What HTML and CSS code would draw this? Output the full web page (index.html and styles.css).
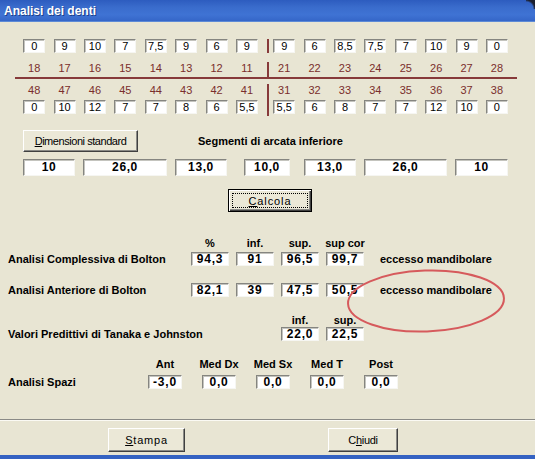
FILE: index.html
```html
<!DOCTYPE html>
<html>
<head>
<meta charset="utf-8">
<title>Analisi dei denti</title>
<link rel="stylesheet" href="styles.css">
</head>
<body>
<div class="window">
  <div class="titlebar">Analisi dei denti</div>
  <span class="corner"></span>

  <div class="teeth">
    <div class="trow row-top">
      <div class="half left">
        <span class="field tbox">0</span><span class="field tbox">9</span><span class="field tbox">10</span><span class="field tbox">7</span><span class="field tbox">7,5</span><span class="field tbox">9</span><span class="field tbox">6</span><span class="field tbox">9</span>
      </div>
      <div class="half right">
        <span class="field tbox">9</span><span class="field tbox">6</span><span class="field tbox">8,5</span><span class="field tbox">7,5</span><span class="field tbox">7</span><span class="field tbox">10</span><span class="field tbox">9</span><span class="field tbox">0</span>
      </div>
    </div>
    <div class="trow row-lab1">
      <div class="half left">
        <span class="tnum">18</span><span class="tnum">17</span><span class="tnum">16</span><span class="tnum">15</span><span class="tnum">14</span><span class="tnum">13</span><span class="tnum">12</span><span class="tnum">11</span>
      </div>
      <div class="half right">
        <span class="tnum">21</span><span class="tnum">22</span><span class="tnum">23</span><span class="tnum">24</span><span class="tnum">25</span><span class="tnum">26</span><span class="tnum">27</span><span class="tnum">28</span>
      </div>
    </div>
    <div class="hline"></div>
    <div class="trow row-lab2">
      <div class="half left">
        <span class="tnum">48</span><span class="tnum">47</span><span class="tnum">46</span><span class="tnum">45</span><span class="tnum">44</span><span class="tnum">43</span><span class="tnum">42</span><span class="tnum">41</span>
      </div>
      <div class="half right">
        <span class="tnum">31</span><span class="tnum">32</span><span class="tnum">33</span><span class="tnum">34</span><span class="tnum">35</span><span class="tnum">36</span><span class="tnum">37</span><span class="tnum">38</span>
      </div>
    </div>
    <div class="trow row-bot">
      <div class="half left">
        <span class="field tbox">0</span><span class="field tbox">10</span><span class="field tbox">12</span><span class="field tbox">7</span><span class="field tbox">7</span><span class="field tbox">8</span><span class="field tbox">6</span><span class="field tbox">5,5</span>
      </div>
      <div class="half right">
        <span class="field tbox">5,5</span><span class="field tbox">6</span><span class="field tbox">8</span><span class="field tbox">7</span><span class="field tbox">7</span><span class="field tbox">12</span><span class="field tbox">10</span><span class="field tbox">0</span>
      </div>
    </div>
  </div>

  <div class="std-row">
    <div class="btn btn-std"><span><u>D</u>imensioni standard</span></div>
    <div class="seg-title">Segmenti di arcata inferiore</div>
  </div>

  <div class="seg-row">
    <span class="field seg w52">10</span>
    <span class="field seg w84">26,0</span>
    <span class="field seg w52">13,0</span>
    <span class="field seg w46 mid">10,0</span>
    <span class="field seg w52 after-mid">13,0</span>
    <span class="field seg w83">26,0</span>
    <span class="field seg w53">10</span>
  </div>

  <div class="calc-row">
    <div class="btn btn-default"><span class="focus"><u>C</u>alcola</span></div>
  </div>

  <div class="analysis">
    <div class="arow hdr-row1">
      <span class="hdr c2">%</span><span class="hdr">inf.</span><span class="hdr">sup.</span><span class="hdr">sup cor</span>
    </div>
    <div class="arow row1">
      <span class="lbl">Analisi Complessiva di Bolton</span>
      <span class="field abox">94,3</span><span class="field abox">91</span><span class="field abox">96,5</span><span class="field abox">99,7</span>
      <span class="note">eccesso mandibolare</span>
    </div>
    <div class="arow row2">
      <span class="lbl">Analisi Anteriore di Bolton</span>
      <span class="field abox">82,1</span><span class="field abox">39</span><span class="field abox">47,5</span><span class="field abox">50,5</span>
      <span class="note">eccesso mandibolare</span>
    </div>
    <div class="arow hdr-row2">
      <span class="hdr c4">inf.</span><span class="hdr">sup.</span>
    </div>
    <div class="arow row3">
      <span class="lbl span3">Valori Predittivi di Tanaka e Johnston</span>
      <span class="field abox">22,0</span><span class="field abox">22,5</span>
    </div>
  </div>

  <div class="spazi">
    <div class="srow shdr">
      <span class="hdr c2">Ant</span><span class="hdr">Med Dx</span><span class="hdr">Med Sx</span><span class="hdr">Med T</span><span class="hdr">Post</span>
    </div>
    <div class="srow sboxes">
      <span class="lbl">Analisi Spazi</span>
      <span class="field abox">-3,0</span><span class="field abox">0,0</span><span class="field abox">0,0</span><span class="field abox">0,0</span><span class="field abox">0,0</span>
    </div>
  </div>

  <div class="footer">
    <div class="btn btn-stampa"><span><u>S</u>tampa</span></div>
    <div class="btn btn-chiudi"><span>C<u>h</u>iudi</span></div>
  </div>

  <svg class="circle-mark" width="164" height="68" viewBox="0 0 164 68">
    <ellipse cx="82" cy="34" rx="78" ry="30.5" transform="rotate(-2 82 34)" fill="none" stroke="#d65a5c" stroke-width="2"/>
  </svg>
</div>
</body>
</html>
```

FILE: styles.css
```css
html, body {
  margin: 0;
  padding: 0;
  background: #e8e5d3;
}

body {
  font-family: "Liberation Sans", Arial, sans-serif;
  font-size: 11px;
  color: #000;
}

.window {
  position: relative;
  width: 535px;
  height: 459px;
  box-sizing: border-box;
  background: #e8e5d3;
  border-bottom: 4px solid #3462c2;
  display: flex;
  flex-direction: column;
  overflow: hidden;
}

.titlebar {
  height: 22px;
  line-height: 22px;
  padding-left: 4px;
  font-size: 12px;
  font-weight: bold;
  color: #fff;
  text-shadow: 1px 1px 0 #1c3f8c;
  background: linear-gradient(180deg, #2d5cbf 0%, #3a6ccc 35%, #3f73d4 70%, #3566c8 100%);
  border-bottom: 1px solid #5d8ad6;
  box-sizing: border-box;
  flex: none;
}

.corner {
  position: absolute;
  right: 0;
  top: 0;
  width: 9px;
  height: 9px;
  background: radial-gradient(circle at 0 100%, transparent 7px, #1b2030 9px);
}

/* ---------- teeth chart ---------- */
.teeth {
  margin: 11px 0 0 15px;
  width: 502px;
  flex: none;
}

.trow {
  display: grid;
  grid-template-columns: 252px 250px;
}

.half {
  display: grid;
  grid-template-columns: repeat(8, 30.4px);
  justify-items: center;
  align-items: start;
}

.half.left {
  padding-left: 4px;
}

.half.right {
  border-left: 2px solid #873a3a;
}

.row-top { height: 20px; box-sizing: border-box; padding-top: 6px; }
.row-lab1 { height: 24px; box-sizing: border-box; padding-top: 9px; }
.row-lab2 { height: 21px; box-sizing: border-box; padding-top: 5px; }
.row-bot { height: 16px; }

.hline {
  height: 2px;
  background: #873a3a;
}

.tnum {
  line-height: 12px;
  color: #7a2e2c;
}

.field {
  display: block;
  box-sizing: border-box;
  background: #fff;
  border: 1px solid;
  border-color: #858580 #f6f6f2 #f6f6f2 #858580;
  box-shadow: inset 1px 1px 0 #c4c4be;
  text-align: center;
  white-space: nowrap;
}

.tbox {
  width: 22px;
  height: 14px;
  line-height: 12px;
}

/* ---------- standard dimensions ---------- */
.std-row {
  display: flex;
  align-items: center;
  margin-top: 14px;
  padding-left: 23px;
  height: 22px;
  flex: none;
}

.btn {
  box-sizing: border-box;
  display: flex;
  align-items: center;
  justify-content: center;
  background: #ebe8d7;
  border: 1px solid;
  border-color: #ffffff #404040 #404040 #ffffff;
  box-shadow: inset -1px -1px 0 #8a8a86;
  white-space: nowrap;
}

.btn-std {
  width: 115px;
  height: 22px;
  letter-spacing: -0.45px;
}

.seg-title {
  margin-left: 60px;
  font-weight: bold;
}

.seg-row {
  display: flex;
  margin-top: 7px;
  padding-left: 23px;
  height: 17px;
  flex: none;
}

.seg {
  height: 17px;
  line-height: 15px;
  margin-left: 8px;
  font-size: 12px;
  font-weight: bold;
  letter-spacing: 0.6px;
}

.seg:first-child { margin-left: 0; }
.seg.mid { margin-left: 17px; }
.seg.after-mid { margin-left: 14px; }
.w46 { width: 46px; }
.w52 { width: 52px; }
.w53 { width: 53px; }
.w83 { width: 83px; }
.w84 { width: 84px; }

/* ---------- calcola ---------- */
.calc-row {
  display: flex;
  margin-top: 13px;
  padding-left: 228px;
  flex: none;
}

.btn-default {
  width: 84px;
  height: 23px;
  border: 1px solid #000;
  box-shadow: inset 1px 1px 0 #ffffff, inset -1px -1px 0 #404040, inset -2px -2px 0 #8a8a86;
  padding: 3px;
  letter-spacing: 0.9px;
}

.focus {
  flex: 1;
  align-self: stretch;
  display: flex;
  align-items: center;
  justify-content: center;
  border: 1px dotted #000;
}

/* ---------- analysis ---------- */
.analysis {
  flex: none;
  margin-top: 25px;
}

.arow {
  display: grid;
  grid-template-columns: 176px repeat(4, 38px) auto;
  column-gap: 7px;
  padding-left: 8px;
  align-items: center;
}

.hdr {
  display: flex;
  justify-content: center;
  font-weight: bold;
  line-height: 13px;
  white-space: nowrap;
}

.c2 { grid-column: 2; }
.c4 { grid-column: 4; }

.lbl {
  font-weight: bold;
  white-space: nowrap;
}

.span3 { grid-column: 1 / span 3; }

.abox {
  height: 14px;
  line-height: 12px;
  font-size: 12px;
  font-weight: bold;
  letter-spacing: 0.8px;
}

.note {
  padding-left: 9px;
  font-weight: bold;
  white-space: nowrap;
}

.hdr-row1 { height: 13px; }
.row1 { margin-top: 2px; height: 14px; }
.row2 { margin-top: 17px; height: 14px; }
.hdr-row2 { margin-top: 17px; height: 13px; }
.row3 { height: 14px; }

/* ---------- spazi ---------- */
.spazi {
  flex: none;
  margin-top: 17px;
}

.srow {
  display: grid;
  grid-template-columns: 120px repeat(5, 34px);
  column-gap: 20px;
  padding-left: 8px;
  align-items: center;
}

.shdr { height: 13px; }
.sboxes { margin-top: 4px; height: 14px; }

/* ---------- footer ---------- */
.footer {
  margin-top: auto;
  height: 36px;
  box-sizing: border-box;
  border-top: 1px solid #8a8a86;
  box-shadow: inset 0 1px 0 #fbfaf4;
  padding-top: 8px;
  display: flex;
  align-items: flex-start;
  flex: none;
}

.btn-stampa {
  margin-left: 108px;
  width: 77px;
  height: 24px;
  letter-spacing: 0.8px;
}

.btn-chiudi {
  margin-left: 143px;
  width: 70px;
  height: 24px;
  letter-spacing: -0.3px;
}

.circle-mark {
  position: absolute;
  left: 344px;
  top: 267px;
}
```
